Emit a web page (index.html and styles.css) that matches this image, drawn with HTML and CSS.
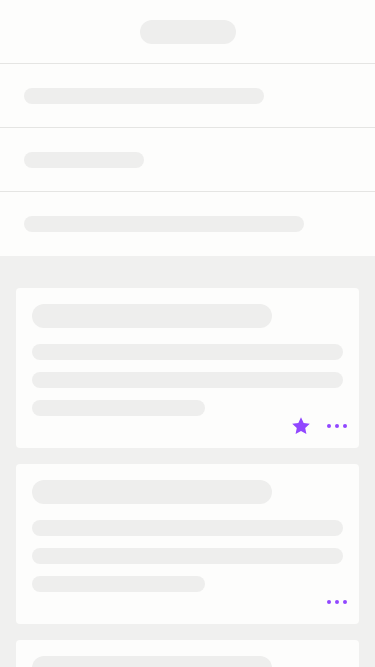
FILE: index.html
```html
<!DOCTYPE html>
<html lang="en">
<head>
  <meta charset="UTF-8">
  <meta name="viewport" content="width=device-width, initial-scale=1.0">
  <title>Loading</title>
  <link rel="stylesheet" href="styles.css">
</head>
<body>
  <!-- Cabecera y lista -->
  <div class="top">
    <div class="header"><div class="bone pill"></div></div>
    <div class="row"><div class="bone bar w240"></div></div>
    <div class="row"><div class="bone bar w120"></div></div>
    <div class="row last"><div class="bone bar w280"></div></div>
  </div>

  <!-- Tarjetas -->
  <div class="feed">
    <div class="card">
      <div class="bone title"></div>
      <div class="bone line"></div>
      <div class="bone line"></div>
      <div class="bone line short"></div>
      <div class="actions">
        <span class="icon">
          <svg width="22" height="22" viewBox="0 0 24 24"><path fill="#9147ff" d="M12 2.5l2.9 6.2 6.7.8-5 4.6 1.3 6.7L12 17.5l-5.9 3.3 1.3-6.7-5-4.6 6.7-.8z"/></svg>
        </span>
        <span class="icon">
          <svg width="24" height="24" viewBox="0 0 24 24"><circle cx="4" cy="12" r="2" fill="#9147ff"/><circle cx="12" cy="12" r="2" fill="#9147ff"/><circle cx="20" cy="12" r="2" fill="#9147ff"/></svg>
        </span>
      </div>
    </div>

    <div class="card">
      <div class="bone title"></div>
      <div class="bone line"></div>
      <div class="bone line"></div>
      <div class="bone line short"></div>
      <div class="actions">
        <span class="icon">
          <svg width="24" height="24" viewBox="0 0 24 24"><circle cx="4" cy="12" r="2" fill="#9147ff"/><circle cx="12" cy="12" r="2" fill="#9147ff"/><circle cx="20" cy="12" r="2" fill="#9147ff"/></svg>
        </span>
      </div>
    </div>

    <div class="card">
      <div class="bone title"></div>
      <div class="bone line"></div>
      <div class="bone line"></div>
      <div class="bone line short"></div>
    </div>
  </div>
</body>
</html>
```

FILE: styles.css
```css
body {
  margin: 0;
  font-family: "Liberation Sans", Arial, sans-serif;
  background-color: #f0f0ef;
}
.top {
  background-color: #fdfdfc;
}
.bone {
  background-color: #eeeeed;
}
.header {
  height: 64px;
  display: flex;
  align-items: center;
  justify-content: center;
  border-bottom: 1px solid #e5e5e3;
  box-sizing: border-box;
}
.pill {
  width: 96px;
  height: 24px;
  border-radius: 12px;
}
.row {
  height: 64px;
  padding: 0 24px;
  display: flex;
  align-items: center;
  border-bottom: 1px solid #e5e5e3;
  box-sizing: border-box;
}
.row.last {
  border-bottom: none;
}
.bar {
  height: 16px;
  border-radius: 8px;
}
.w240 { width: 240px; }
.w120 { width: 120px; }
.w280 { width: 280px; }
.feed {
  padding: 32px 16px 0;
  display: flex;
  flex-direction: column;
  gap: 16px;
}
.card {
  background-color: #fdfdfc;
  border-radius: 4px;
  padding: 16px 16px 10px;
  height: 160px;
  box-sizing: border-box;
  display: flex;
  flex-direction: column;
  flex-shrink: 0;
}
.title {
  width: 240px;
  height: 24px;
  border-radius: 12px;
  margin-bottom: 16px;
}
.line {
  height: 16px;
  border-radius: 8px;
  margin-bottom: 12px;
}
.line.short {
  width: 173px;
  margin-bottom: 0;
}
.actions {
  display: flex;
  justify-content: flex-end;
  gap: 12px;
  margin-top: -2px;
  margin-right: -6px;
}
.icon {
  width: 24px;
  height: 24px;
  display: flex;
  align-items: center;
  justify-content: center;
}
```
